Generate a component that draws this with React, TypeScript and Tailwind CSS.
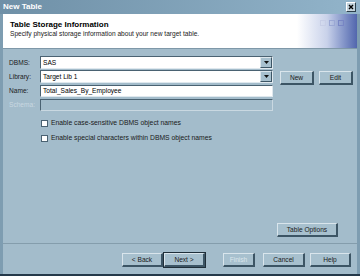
import React from "react";

const font = { fontFamily: '"Liberation Sans", Arial, sans-serif' };

function Btn({ label, className = "", disabled = false, bold = false }: { label: string; className?: string; disabled?: boolean; bold?: boolean }) {
  return (
    <div
      className={`flex items-center justify-center h-[14px] text-[6.6px] bg-[#a7c0ce] border-t border-l border-t-[#d9e5ec] border-l-[#d9e5ec] border-r-2 border-b-2 border-r-[#3c5565] border-b-[#3c5565] ${bold ? "outline outline-1 outline-[#1f2f3a]" : ""} ${disabled ? "text-[#dbe6ec]" : "text-[#1a1a1a]"} ${className}`}
    >
      {label}
    </div>
  );
}

function Combo({ value }: { value: string }) {
  return (
    <div className="flex h-[13px] w-[233px] bg-white border border-t-[#4a6272] border-l-[#4a6272] border-r-[#dfe8ee] border-b-[#dfe8ee]">
      <div className="flex-1 text-[6.6px] leading-[11px] pl-[2px] text-black">{value}</div>
      <div className="w-[12px] h-[11px] bg-[#a7c0ce] border-t border-l border-t-[#dde7ed] border-l-[#dde7ed] border-r border-b border-r-[#3c5565] border-b-[#3c5565] flex items-center justify-center">
        <svg width="5" height="3" viewBox="0 0 5 3"><path d="M0 0h5L2.5 3z" fill="#111" /></svg>
      </div>
    </div>
  );
}

function Check({ label }: { label: string }) {
  return (
    <div className="flex items-center gap-[3px] h-[10px]">
      <div className="w-[7px] h-[7px] bg-white border border-[#4a6272]" />
      <span className="text-[6.8px] text-[#1a1a1a]">{label}</span>
    </div>
  );
}

export default function App() {
  return (
    <div style={font} className="w-[360px] h-[276px] flex flex-col bg-[#7e9db1] overflow-hidden border-b-2 border-b-[#25394a]">
      {/* Title bar */}
      <div className="h-[14px] flex items-center justify-between px-[3px] bg-gradient-to-r from-[#6f90a7] to-[#92b4ca]">
        <span className="text-[8px] font-bold text-white leading-none">New Table</span>
        <div className="w-[10px] h-[10px] bg-[#c4d3dc] border border-t-white border-l-white border-r-[#2b3e4a] border-b-[#2b3e4a] flex items-center justify-center mr-[1px]">
          <svg width="6" height="6" viewBox="0 0 6 6"><path d="M1 1l4 4M5 1l-4 4" stroke="#000" strokeWidth="1.4" /></svg>
        </div>
      </div>
      <div className="flex-1 flex flex-col mx-[3px] bg-[#a3bccb]">
        {/* Header */}
        <div className="h-[35px] flex bg-white border-b border-b-[#7f98a8]">
          <div className="flex-1 pl-[7px] pt-[6px]">
            <div className="text-[8px] font-bold text-black leading-[10px]">Table Storage Information</div>
            <div className="text-[6.6px] text-[#222] leading-[8px]">Specify physical storage information about your new target table.</div>
          </div>
          <div className="w-[60px] relative bg-gradient-to-r from-white via-[#c9d2ea] to-[#5266ad]">
            <div className="absolute top-[6px] left-[23px] flex gap-[3px]">
              <div className="w-[6px] h-[6px] border border-[#c7cee6]" />
              <div className="w-[6px] h-[6px] border border-[#9ba8d4]" />
              <div className="w-[6px] h-[6px] border border-[#7886c4]" />
            </div>
          </div>
        </div>
        {/* Body */}
        <div className="flex-1 flex flex-col pt-[7px] pl-[6px] pr-[2px]">
          <div className="flex items-center h-[13px] mb-[1px]">
            <span className="w-[31px] text-[6.6px] text-[#1a1a1a]">DBMS:</span>
            <Combo value="SAS" />
          </div>
          <div className="flex items-center h-[13px] mb-[1px]">
            <span className="w-[31px] text-[6.6px] text-[#1a1a1a]">Library:</span>
            <Combo value="Target Lib 1" />
            <Btn label="New" className="w-[34px] ml-[7px] mt-[3px]" />
            <Btn label="Edit" className="w-[34px] ml-[5px] mt-[3px]" />
          </div>
          <div className="flex items-center h-[13px] mb-[1px]">
            <span className="w-[31px] text-[6.6px] text-[#1a1a1a]">Name:</span>
            <div className="h-[12px] w-[233px] bg-white border border-t-[#4a6272] border-l-[#4a6272] border-r-[#dfe8ee] border-b-[#dfe8ee] text-[6.6px] leading-[10px] pl-[2px]">Total_Sales_By_Employee</div>
          </div>
          <div className="flex items-center h-[13px]">
            <span className="w-[31px] text-[6.6px] text-[#c9d8e1]">Schema:</span>
            <div className="h-[12px] w-[233px] border border-t-[#4a6272] border-l-[#4a6272] border-r-[#c9d8e1] border-b-[#c9d8e1]" />
          </div>
          <div className="pl-[32px] pt-[7px] flex flex-col gap-[5px]">
            <Check label="Enable case-sensitive DBMS object names" />
            <Check label="Enable special characters within DBMS object names" />
          </div>
          <div className="flex-1" />
          <div className="flex justify-end pr-[17px] pb-[6px]">
            <Btn label="Table Options" className="w-[61px]" />
          </div>
        </div>
        {/* Footer */}
        <div className="border-t border-t-[#849dac] h-[31px] flex items-start pt-[9px] pl-[119px]">
          <Btn label="< Back" className="w-[41px]" />
          <Btn label="Next >" className="w-[41px] ml-[1px]" bold />
          <Btn label="Finish" className="w-[32px] ml-[18px]" disabled />
          <Btn label="Cancel" className="w-[42px] ml-[8px]" />
          <Btn label="Help" className="w-[41px] ml-[5px]" />
        </div>
      </div>
    </div>
  );
}
